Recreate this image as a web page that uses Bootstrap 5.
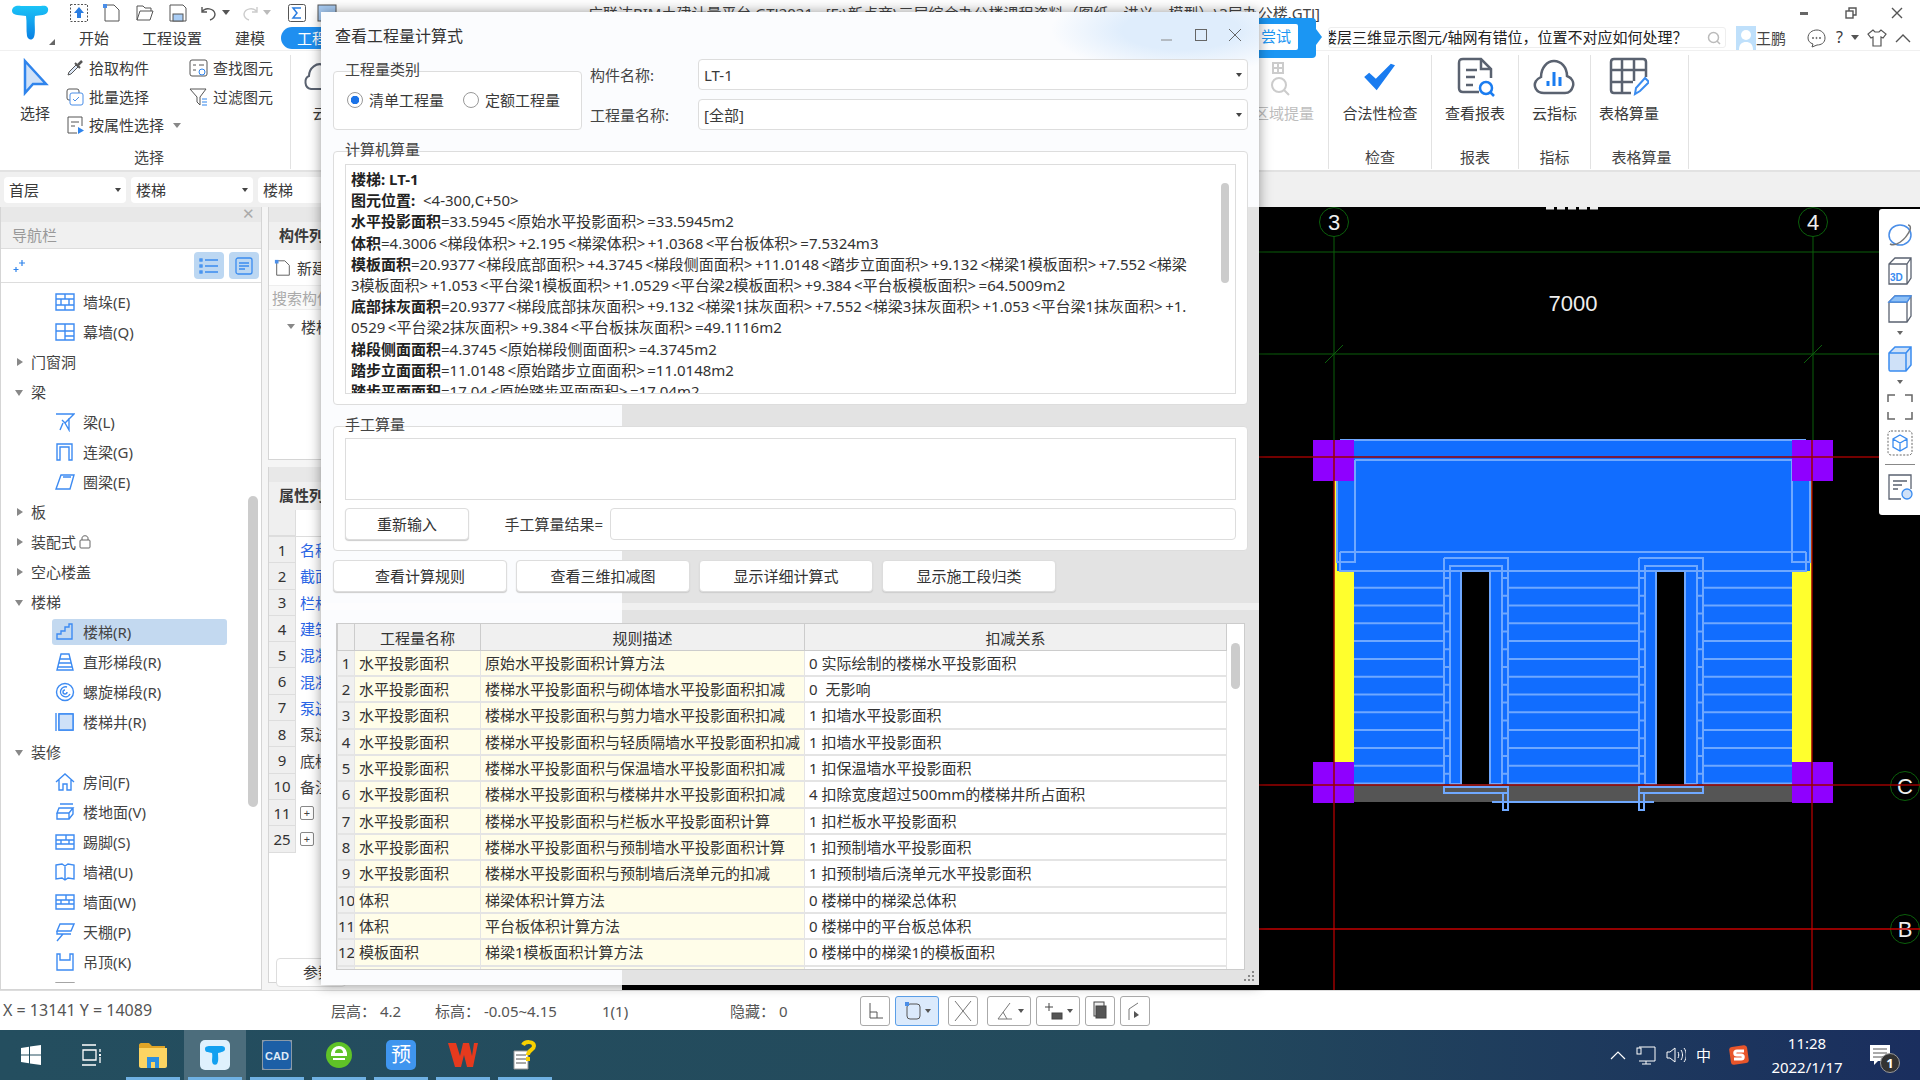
<!DOCTYPE html>
<html lang="zh-CN">
<head>
<meta charset="UTF-8">
<title>查看工程量计算式</title>
<link href="https://cdn.jsdelivr.net/npm/bootstrap@5.3.3/dist/css/bootstrap.min.css" rel="stylesheet">
<style>
html,body{margin:0;width:1920px;height:1080px;overflow:hidden}
body{font:15px/1.2 "Noto Sans","Noto Sans CJK SC",sans-serif;color:#3a3a3a;background:#fff;position:relative}
svg{display:block;flex:none}
/* app header */
.app-head{height:50px;background:#fff}
.logo-col{width:62px;padding:5px 0 0 11px;position:relative}
.logo-corner{position:absolute;left:49px;top:39px;border:3px solid transparent;border-right-color:#666;border-bottom-color:#666}
.qat-row{height:25px}
.qat-btn{width:33px;display:flex;justify-content:center}
.qat-end{width:20px}
.caret-dn{width:0;height:0;border:4px solid transparent;border-top:5px solid #555;border-bottom:0}
.caret-lt{border-top-color:#bbb}
.app-title{position:absolute;left:588px;top:4px;white-space:nowrap;font-size:15px;color:#444}
.win-btns{position:absolute;right:0;top:0;height:25px}
.win-btns span{width:46px;display:flex;justify-content:center;align-items:center}
.tab-row{height:25px;padding-left:17px}
.tab-item{margin-right:33px;white-space:nowrap}
.tab-on{background:#1f8ff0;color:#fff;border-radius:12px;padding:2px 16px;margin-left:-17px;margin-right:0}
.help-box{margin-left:auto;width:398px;height:21px;border:1px solid #eee;border-radius:3px;overflow:hidden;white-space:nowrap;color:#222;font-size:15px;line-height:19px}
.help-text{margin-left:-7px;width:384px;overflow:hidden}
.user-name{margin:0 20px 0 0;color:#444}
.user-face{width:20px;height:24px;margin-left:10px;background:#bfe0fb}
.top-icons{width:106px;gap:8px}
/* ribbon */
.ribbon{height:122px;border-top:1px solid #f0f0f0;border-bottom:2px solid #e2e2e2;padding-top:4px;background:#fff}
.rb-group{height:114px;border-right:1px solid #e2e2e2;position:relative;display:flex;flex-direction:column;flex:none}
.rb-body{flex:1;display:flex}
.rb-foot{height:22px;text-align:center;color:#444;line-height:20px}
.w-sel{width:291px}.w-cloud{width:1038px}.w-chk{width:103px}.w-rep{width:87px}.w-idx{width:72px}.w-tab{width:98px}
.foot-sel{padding-left:8px}
.rb-big{display:flex;flex-direction:column;align-items:center;padding-top:1px;white-space:nowrap}
.rb-big svg{height:42px;margin-bottom:6px}
.rb-big.dim{color:#bdbdbd}
.rb-small{display:flex;align-items:center;height:28.500px;gap:5px;white-space:nowrap}
.sel-col1{width:123px;margin-left:16px;margin-top:-1px}
.sel-col2{width:100px;margin-left:0;margin-top:-1px}
.cloud-l{margin-left:12px}
.cloud-r{margin-left:auto;margin-right:14px}
/* combo strip */
.combo-strip{height:35px;background:#f0f0f0;padding:5px 4px 3px;gap:5px}
.strip-sel{width:122px;height:26px;background:#fff;border-radius:4px;padding:0 5px;display:flex;align-items:center;justify-content:space-between}
.strip-sel .caret-dn{border-width:3px;border-top:4px solid #444}
/* main area */
.work-area{height:783px;background:#f5f5f5}
.side-panel{width:262px;background:#fff;border:1px solid #d5d5d5;border-top:0;overflow:hidden;position:relative;flex:none}
.pane-bar{height:15px;background:#e8e8e8;position:relative}
.pane-x{position:absolute;right:6px;top:-3px;color:#aaa;font-size:15px}
.pane-title{height:27px;background:#f0f0f0;border-bottom:1px solid #ddd;padding:0 11px;line-height:26px;color:#999}
.nav-tools{height:34px;border-bottom:1px solid #ddd;padding:0 2px 0 12px;gap:5px}
.view-btn{width:30px;height:27px;background:#bcd7f2;border-radius:4px;display:flex;align-items:center;justify-content:center}
.nav-tree{height:700px;overflow:hidden;padding-top:4px}
.tree-row{height:30px;display:flex;align-items:center;position:relative;white-space:nowrap;color:#444}
.tree-l1{padding-left:30px}
.tree-l2{padding-left:82px}
.tree-l2 svg{position:absolute;left:54px;top:5px}
.tree-on::before{content:"";position:absolute;left:51px;width:175px;top:2px;bottom:2px;background:#c3d9f0;border-radius:3px}
.tree-on span{position:relative}
.tree-arr{position:absolute;left:14px;top:11px;width:0;height:0;border:4px solid transparent}
.arr-r{border-left:6px solid #888;border-right:0;left:16px}
.arr-d{border-top:6px solid #888;border-bottom:0;top:13px}
.tree-thumb{position:absolute;left:247px;top:289px;width:10px;height:311px;background:#ccc;border-radius:5px}
.lock-ic{margin-left:3px}
.mid-panel{width:354px;margin-left:6px;flex:none;overflow:hidden}
.mid-top{height:253px;background:#fff;border:1px solid #d5d5d5;border-top:0}
.mid-tab{height:28px;background:#f0f0f0;font-weight:700;padding:0 10px;line-height:27px}
.mid-new{height:35px;padding-left:5px;gap:5px}
.mid-search{height:25px;background:#fafafa;padding-left:3px;color:#aaa;line-height:25px;border-top:1px solid #eee;border-bottom:1px solid #eee}
.mid-node{height:33px;padding-left:18px;gap:6px}
.mid-low{margin-top:7px;height:516px;border:1px solid #d5d5d5;border-top:0;background:#fff}
.prop-head{height:27px;border-bottom:1px solid #ddd}
.prop-row{height:26.3px;display:flex;align-items:center;color:#2a66e6}
.prop-num{width:27px;height:100%;background:#efefef;border-right:1px solid #ddd;border-bottom:1px solid #ddd;display:flex;align-items:center;justify-content:center;color:#333;margin-right:4px;flex:none}
.prop-dark{color:#444}
.prop-plus{width:14px;height:14px;border:1px solid #888;border-radius:2px;font-size:11px;line-height:12px;text-align:center;color:#444}
.ref-btn{position:absolute;left:276px;top:958px;width:70px;height:29px;border:1px solid #ddd;border-radius:4px;background:#fff;padding-left:26px;line-height:27px}
.canvas-wrap{position:relative;flex:1;background:#000}
.side-tools{position:absolute;right:0;top:2px;width:41px;height:306px;background:#fff;border-radius:3px 0 0 3px;padding-top:13px;display:flex;flex-direction:column;align-items:center}
.side-tools hr{width:30px;margin:8px 0 9px;border-color:#888;opacity:1}
.cv-mini{border-width:3px;border-top:4px solid #666;margin:7px 0 10px}
.cv-hex{margin-top:10px}
/* status bar and taskbar */
.status-bar{height:40px;background:#fff;border-top:1px solid #ddd;color:#555;white-space:nowrap}
.st-xy{width:331px;padding-left:3px;font-size:16px}.st-a{width:104px}.st-b{width:167px}.st-c{width:128px}.st-d{width:130px}
.tool-btn{height:30px;width:30px;margin-right:5px;border:1px solid #aaa;border-radius:3px;display:flex;align-items:center;justify-content:center;gap:3px;background:#fff}
.tool-wide{width:44px}
.tool-on{background:#dbeafc;border-color:#5b9fe8}
.tool-gap{margin-left:4px}
.tool-btn .caret-dn{border-width:3px;border-top:4px solid #555}
.task-bar{height:50px;background:linear-gradient(90deg,#244e5f,#234a5c 60%,#1a2e5e);color:#fff}
.task-slot{width:62px;height:50px;display:flex;align-items:center;justify-content:center;position:relative;flex:none}
.task-slot.slot-view{width:60px}
.task-open::after{content:"";position:absolute;left:4px;right:4px;bottom:0;height:3px;background:#6fb1e3}
.task-on{background:#4c6d7c}
.task-tray{margin-left:auto;gap:10px;padding-right:30px}
.task-clock{text-align:center;width:90px;margin:0 8px 0 3px;line-height:24px;font-size:15px}
.note-badge{position:absolute;right:-10px;bottom:-8px;width:20px;height:20px;border-radius:50%;background:#333;border:1px solid #999;font-size:13px;font-weight:700;line-height:18px;text-align:center}
/* help bubble under the dialog */
.help-bubble{position:absolute;left:1000px;top:18px;width:316px;height:40px;background:#1b96f3;border-radius:4px}
.help-bubble::after{content:"";position:absolute;right:-6px;top:11px;border:8px solid transparent;border-left:6px solid #1b96f3;border-right:0}
.try-btn{position:absolute;right:18px;top:6px;width:60px;height:26px;background:#fff;color:#1b96f3;border-radius:2px;text-align:right;padding-right:7px;line-height:25px}
/* dialog */
.qty-dialog{position:absolute;left:321px;top:12px;width:938px;height:973px;padding:0 11px 0 12px;box-shadow:0 0 12px rgba(0,0,0,.4);
 background:linear-gradient(#e3e3e3,#e3e3e3) 301px 195px/100% 100% no-repeat,radial-gradient(ellipse 130px 44px at 860px 18px,#dfedfc 45%,rgba(223,237,252,0) 100%),#fbfcfe}
.dlg-head{height:47px;margin-left:2px;font-size:16px;line-height:49px;color:#333;position:relative}
.dlg-ctl{position:absolute;right:0;top:0;height:46px;display:flex;align-items:center;gap:20px;padding-right:6px}
.gbox{border:1px solid #ddd;border-radius:4px;background:#fff;position:relative}
.gbox-cap{position:absolute;left:11px;top:-12px;color:#444;white-space:nowrap}
.top-fields{height:71px}
.gbox-kind{width:249px;height:59px;margin-top:12px;padding-top:19px;padding-left:13px;flex:none;gap:19px}
.form-check-input.radio-gtj{width:16px;height:16px;margin:0 6px 0 0;border:1px solid #999;float:none}
.form-check-input.radio-gtj:checked{background-color:#fff;border-color:#999;background-image:radial-gradient(circle,#1a73e8 0 4px,transparent 4.5px)}
.radio-line{display:flex;align-items:center;white-space:nowrap;height:18px}
.name-fields{flex:1;padding-left:8px}
.name-row{height:31px;margin-bottom:9px}
.name-lbl{width:108px;color:#444}
.name-sel{flex:1;height:31px;border:1px solid #ddd;border-radius:4px;background:#fff;padding:0 5px;display:flex;align-items:center;justify-content:space-between}
.name-sel .caret-dn{border-width:3px;border-top:4px solid #444}
.gbox-calc{height:254px;margin-top:21px;padding:12px 11px}
.calc-text{height:230px;border:1px solid #ddd;padding:4px 5px;overflow:hidden;position:relative}
.calc-line{height:21.2px;line-height:21.2px;white-space:nowrap;font-size:15px;color:#333}
.calc-line b{color:#222}
.calc-thumb{position:absolute;right:6px;top:18px;width:8px;height:100px;background:#ccc;border-radius:4px}
.gbox-hand{height:125px;margin-top:21px;padding:11px 11px 0}
.hand-area{height:62px;border:1px solid #ddd}
.hand-row{margin-top:8px;height:32px}
.dlg-btn{border:1px solid #ddd;border-radius:4px;background:#fff;box-shadow:0 1px 1px #ccc;font-size:15px;color:#333;padding:0;height:32px;line-height:30px}
.btn-reset{width:124px}
.hand-lbl{width:141px;text-align:right;padding-right:7px;white-space:nowrap}
.hand-input{flex:1;height:32px;border:1px solid #ddd;border-radius:4px;background:#fff}
.dlg-btns{margin-top:9px;gap:9px}
.dlg-btns .dlg-btn{width:174px}
.dlg-split{height:7px;margin:11px -11px 13px -12px;background:rgba(255,255,255,.45)}
.qty-wrap{margin-left:3px;width:909px;height:347px;border:1px solid #ccc;background:#fff;overflow:hidden;position:relative}
table.qty-table{table-layout:fixed;width:889px;margin:0;border-collapse:collapse;font-size:15px;color:#333}
.qty-table>thead>tr>th{--bs-table-bg:#f0f0f0;height:26px;padding:0;text-align:center;font-weight:400;border:1px solid #ccc;border-top:0;line-height:24px;color:#333}
.qty-table>tbody>tr>td{height:26px;padding:0 3px 0 4px;border:1px solid #e4e4e4;border-width:0 1px 2px 1px;white-space:nowrap;overflow:hidden;line-height:24px}
.qty-table>tbody>tr:nth-child(3n)>td{height:27px}
.qty-table>tbody>tr>td.row-no{--bs-table-bg:#f0f0f0;padding:0;text-align:center}
.qty-table>tbody>tr>td.row-ylw{--bs-table-bg:#fffde9}
.qty-thumb{position:absolute;left:894px;top:19px;width:9px;height:46px;background:#ccc;border-radius:5px}
.dlg-grip{position:absolute;right:4px;bottom:3px}
</style>
</head>
<body class="d-flex flex-column">

<!-- title row + tabs -->
<div class="app-head d-flex">
  <div class="logo-col">
    <svg width="38" height="36" viewBox="0 0 38 36"><defs><linearGradient id="tg" x1="0" y1="0" x2="0" y2="1"><stop offset="0" stop-color="#1bc4f7"/><stop offset="1" stop-color="#0a80e4"/></linearGradient></defs><path fill="url(#tg)" d="M1 6C1 1 6 0 10 1H30C35 0 38 2 37 6C36 11 28 10 24 11C23 18 25 27 23 32C21 36 17 35 16 31C15 25 16 17 15 11C10 10 1 11 1 6z"/></svg>
    <i class="logo-corner"></i>
  </div>
  <div class="flex-grow-1">
    <div class="qat-row d-flex align-items-center">
      <span class="qat-btn"><svg width="20" height="20" viewBox="0 0 20 20" fill="none" stroke="#555"><rect x="1.5" y="1.5" width="17" height="17" stroke-dasharray="2 1.5"/><path fill="#2a7de1" stroke="none" d="M10 4l5 6h-3v5H8v-5H5z"/></svg></span>
      <span class="qat-btn"><svg width="20" height="20" viewBox="0 0 20 20" fill="none" stroke="#555"><path d="M3 2h9l5 5v11H3z"/><rect x="1" y="1" width="4" height="4" fill="#4a8ee8" stroke="none"/></svg></span>
      <span class="qat-btn"><svg width="20" height="18" viewBox="0 0 20 18" fill="none" stroke="#555"><path d="M2 16V2h6l2 2h6v3M2 16l3-9h13l-3 9z"/></svg></span>
      <span class="qat-btn"><svg width="20" height="18" viewBox="0 0 20 18" fill="none" stroke="#555"><path d="M2 1h13l3 3v13H2z"/><rect x="5" y="10" width="10" height="7" fill="#a9cdf5"/></svg></span>
      <span class="qat-btn ms-1"><svg width="18" height="16" viewBox="0 0 18 16" fill="none" stroke="#555" stroke-width="1.4"><path d="M2 2v5h5M2 7c3-5 12-4 13 2 0 3-2 5-5 6"/></svg><i class="caret-dn align-self-center ms-1"></i></span>
      <span class="qat-btn ms-2"><svg width="18" height="16" viewBox="0 0 18 16" fill="none" stroke="#ccc" stroke-width="1.4"><path d="M16 2v5h-5M16 7c-3-5-12-4-13 2 0 3 2 5 5 6"/></svg><i class="caret-dn caret-lt align-self-center ms-1"></i></span>
      <span class="qat-btn ms-2"><svg width="20" height="20" viewBox="0 0 20 20" fill="none" stroke="#555"><rect x="1.5" y="1.5" width="17" height="17" rx="2"/><path stroke="#2a7de1" stroke-width="1.5" d="M14 5H6l4 5-4 5h8"/></svg></span>
      <span class="qat-btn qat-end ms-1"><svg width="20" height="18" viewBox="0 0 20 18" fill="#a9cdf5" stroke="#555"><rect x="1" y="1" width="18" height="16"/></svg></span>
    </div>
    <div class="tab-row d-flex align-items-center">
      <span class="tab-item">开始</span><span class="tab-item">工程设置</span><span class="tab-item">建模</span><span class="tab-item tab-on">工程量</span>
      <div class="help-box d-flex align-items-center">
        <div class="help-text">楼层三维显示图元/轴网有错位，位置不对应如何处理？</div>
        <svg class="ms-auto me-1" width="14" height="14" viewBox="0 0 14 14" fill="none" stroke="#bbb" stroke-width="1.5"><circle cx="6.5" cy="6.5" r="5"/><path d="M10 10l3 3"/></svg>
      </div>
      <span class="user-face d-flex justify-content-center align-items-end"><svg width="14" height="22" viewBox="0 0 14 22" fill="#fff"><circle cx="7" cy="7" r="5"/><path d="M0 22c0-6 3-8 7-8s7 2 7 8z"/></svg></span>
      <span class="user-name">王鹏</span>
      <div class="top-icons d-flex align-items-center me-2">
        <svg width="22" height="20" viewBox="0 0 22 20" fill="none" stroke="#555"><path d="M2 10c0-5 4-8 9-8 4 0 8 3 8 8s-4 7-8 7l-5 2 1-3c-3-1-5-3-5-6z"/><circle cx="7" cy="10" r=".6"/><circle cx="10.500" cy="10" r=".6"/><circle cx="14" cy="10" r=".6"/></svg>
        <span class="fs-6">?</span><i class="caret-dn"></i>
        <svg width="20" height="20" viewBox="0 0 20 20" fill="none" stroke="#555" stroke-width="1.2"><path d="M6 2L1 6l3 4 2-1v9h8V9l2 1 3-4-5-4-2 2h-4z"/></svg>
        <svg width="16" height="10" viewBox="0 0 16 10" fill="none" stroke="#555" stroke-width="1.4"><path d="M1 9l7-7 7 7"/></svg>
      </div>
    </div>
  </div>
  <div class="app-title">广联达BIM土建计量平台 GTJ2021 - [F:\新点商\三层综合办公楼课程资料（图纸、讲义、模型）\3层办公楼.GTJ]</div>
  <div class="win-btns d-flex align-items-center">
    <span><svg width="10" height="4" viewBox="0 0 10 4"><rect y="1" width="8" height="3" fill="#666"/></svg></span>
    <span><svg width="12" height="12" viewBox="0 0 12 12" fill="none" stroke="#555" stroke-width="1.4"><rect x="1" y="4" width="7" height="7"/><path d="M4 4V1h7v7H8"/></svg></span>
    <span><svg width="12" height="12" viewBox="0 0 12 12" stroke="#555" stroke-width="1.4"><path d="M1 1l10 10M11 1L1 11"/></svg></span>
  </div>
</div>

<div class="help-bubble"><span class="try-btn">尝试</span></div>

<!-- ribbon -->
<div class="ribbon d-flex">
  <div class="rb-group w-sel">
    <div class="rb-body">
      <div class="rb-big ms-3 ps-1">
        <svg width="28" height="36" viewBox="0 0 28 36" fill="#cfe1f8" stroke="#2f84ec" stroke-width="2.500"><path d="M4 2l21 23H12l-8 9z"/></svg>
        <span>选择</span>
      </div>
      <div class="sel-col1">
        <div class="rb-small"><svg width="18" height="18" viewBox="0 0 18 18" fill="none" stroke="#555"><path d="M2 16l1-3 7-7 2 2-7 7z" fill="#dce8f8"/><path d="M9 4l5 5" stroke-width="2"/><path d="M12 6l4-4" stroke-width="2.500"/></svg>拾取构件</div>
        <div class="rb-small"><svg width="18" height="18" viewBox="0 0 18 18" fill="none" stroke="#555"><rect x="1" y="1" width="12" height="11" rx="2"/><rect x="4" y="5" width="13" height="12" rx="2" fill="#fff" stroke="#4a8ee8"/><path stroke="#4a8ee8" d="M7 11l2 2 4-4"/></svg>批量选择</div>
        <div class="rb-small"><svg width="18" height="18" viewBox="0 0 18 18" fill="none" stroke="#555"><path d="M2 1h14v9M2 1v16h9M5 6h8M5 10h4"/><path fill="#2f84ec" stroke="none" d="M12 11l6 3.500-6 3.500z"/></svg>按属性选择<i class="caret-dn ms-1" style="border-top-color:#888"></i></div>
      </div>
      <div class="sel-col2">
        <div class="rb-small"><svg width="19" height="19" viewBox="0 0 19 19" fill="none" stroke="#555"><rect x="1" y="1" width="17" height="16" rx="2"/><path d="M4 6h3M10 6h5M4 11h3"/><circle cx="13" cy="13" r="3" stroke="#2f84ec"/></svg>查找图元</div>
        <div class="rb-small"><svg width="19" height="19" viewBox="0 0 19 19" fill="none" stroke="#555"><path d="M1 2h16l-6 8v8l-3-3v-5z"/><path stroke="#2f84ec" d="M13 12h5M13 15h5M13 18h5"/></svg>过滤图元</div>
      </div>
    </div>
    <div class="rb-foot foot-sel">选择</div>
  </div>
  <div class="rb-group w-cloud">
    <div class="rb-body">
      <div class="rb-big cloud-l"><svg width="34" height="36" viewBox="0 0 34 36" fill="none" stroke="#5a6270" stroke-width="2"><path d="M8 30C1 29 1 19 6 17 6 9 14 3 20 6c6 2 8 8 7 11 5 3 5 12-2 13z"/></svg><span>云</span></div>
      <div class="rb-big cloud-r dim"><svg width="34" height="36" viewBox="0 0 34 36" fill="none" stroke="#ccc" stroke-width="2"><circle cx="12" cy="26" r="7"/><path d="M17 31l5 5M6 4h10v10H6zM11 4v10M6 9h10"/></svg><span>区域提量</span></div>
    </div>
    <div class="rb-foot"></div>
  </div>
  <div class="rb-group w-chk">
    <div class="rb-body justify-content-center">
      <div class="rb-big"><svg width="40" height="36" viewBox="-4 -7 48 50"><path fill="#1a7cf0" d="M1 18l6-5 8 7L33 2l5 2-22 30z"/></svg><span>合法性检查</span></div>
    </div>
    <div class="rb-foot">检查</div>
  </div>
  <div class="rb-group w-rep">
    <div class="rb-body justify-content-center">
      <div class="rb-big"><svg width="40" height="40" viewBox="0 0 40 40" fill="none" stroke="#5a6270" stroke-width="2.500"><path d="M24 35H8c-3 0-4-2-4-4V6c0-3 1-4 4-4h18l10 10v9"/><path d="M26 2v10h10M11 13h11M11 20h9M11 28h7"/><circle cx="31" cy="31" r="6" stroke="#1a7cf0"/><path stroke="#1a7cf0" d="M35 35l4 4"/></svg><span>查看报表</span></div>
    </div>
    <div class="rb-foot">报表</div>
  </div>
  <div class="rb-group w-idx">
    <div class="rb-body justify-content-center">
      <div class="rb-big"><svg width="42" height="38" viewBox="0 0 42 38" fill="none" stroke="#5a6270" stroke-width="2.500"><path d="M11 35C3 35 0 28 3 23c1-2 3-3 5-4C8 10 14 3 21 3s13 6 13 15c5 2 7 6 6 10-1 4-4 7-8 7z"/><path stroke="#1a7cf0" stroke-width="3" d="M15 28v-5M21 28V14M27 28v-9"/></svg><span>云指标</span></div>
    </div>
    <div class="rb-foot">指标</div>
  </div>
  <div class="rb-group w-tab">
    <div class="rb-body ps-2">
      <div class="rb-big"><svg width="40" height="40" viewBox="0 0 40 40" fill="none" stroke="#5a6270" stroke-width="2.500"><path d="M22 36H5c-2 0-3-1-3-3V5c0-2 1-3 3-3h29c2 0 3 1 3 3v15M2 13h35M2 25h22M13 2v34M25 2v22"/><path stroke="#3a8cf0" stroke-width="2" d="M26 37l1-6 9-10 4 4-9 9z"/></svg><span>表格算量</span></div>
    </div>
    <div class="rb-foot ps-1">表格算量</div>
  </div>
</div>

<div class="combo-strip d-flex">
  <div class="strip-sel">首层<i class="caret-dn"></i></div>
  <div class="strip-sel">楼梯<i class="caret-dn"></i></div>
  <div class="strip-sel">楼梯<i class="caret-dn"></i></div>
</div>

<!-- work area: navigator, component panes, drawing -->
<div class="work-area d-flex">
  <div class="side-panel">
    <div class="pane-bar"><span class="pane-x">✕</span></div>
    <div class="pane-title">导航栏</div>
    <div class="nav-tools d-flex align-items-center">
      <svg class="me-auto" width="14" height="14" viewBox="0 0 14 14" stroke="#2f84ec" stroke-width="1.200"><path d="M9 1v6M6 4h6M3 8v5M.5 10.500h5"/></svg>
      <span class="view-btn"><svg width="20" height="16" viewBox="0 0 20 16" fill="none" stroke="#3a8cf0" stroke-width="1.300"><path d="M6 2h13M6 8h13M6 14h13"/><rect x="1" y="1" width="2" height="2"/><rect x="1" y="7" width="2" height="2"/><rect x="1" y="13" width="2" height="2"/></svg></span>
      <span class="view-btn"><svg width="18" height="18" viewBox="0 0 18 18" fill="none" stroke="#3a8cf0" stroke-width="1.300"><rect x="1" y="1" width="16" height="16" rx="2"/><path d="M4 6h10M4 9h10M4 12h6"/></svg></span>
    </div>
    <div class="nav-tree" id="navTree"></div>
    <div class="tree-thumb"></div>
  </div>

  <div class="mid-panel">
    <div class="mid-top">
      <div class="pane-bar"></div>
      <div class="mid-tab">构件列表</div>
      <div class="mid-new d-flex align-items-center"><svg width="18" height="18" viewBox="0 0 20 20" fill="none" stroke="#555"><path d="M3 2h9l5 5v11H3z"/><rect x="1" y="1" width="4" height="4" fill="#4a8ee8" stroke="none"/></svg>新建</div>
      <div class="mid-search">搜索构件...</div>
      <div class="mid-node d-flex align-items-center"><i class="caret-dn" style="border-top-color:#888"></i>楼梯</div>
    </div>
    <div class="mid-low">
      <div class="pane-bar"></div>
      <div class="mid-tab">属性列表</div>
      <div class="prop-head d-flex"><span class="prop-num"></span></div>
      <div id="propRows"></div>
    </div>
  </div>
  <div class="ref-btn">参数</div>

  <div class="canvas-wrap">
    <svg id="drawSvg" width="1298" height="783" viewBox="622 207 1298 783">
      <path d="M1546 208H1600" stroke="#eee" stroke-width="3" stroke-dasharray="8 3"/>
      <g stroke="#0b5f0b" stroke-width="1" fill="none">
        <path d="M622 252H1879M622 354H1879M1334 236V440M1813 236V440"/>
        <path d="M1325 363l18-18M1804 363l18-18"/>
        <circle cx="1334" cy="222" r="14.500"/><circle cx="1813" cy="222" r="14.500"/>
        <circle cx="1905" cy="786" r="14.500"/><circle cx="1905" cy="929" r="14.500"/>
      </g>
      <g fill="#eee" font-family="Liberation Sans, sans-serif" font-size="22" text-anchor="middle">
        <text x="1334" y="230">3</text><text x="1813" y="230">4</text>
        <text x="1905" y="794">C</text><text x="1905" y="937">B</text>
        <text x="1573" y="311">7000</text>
      </g>
      <g fill="#ffff2d"><rect x="1334" y="481" width="20" height="281"/><rect x="1792" y="481" width="20" height="281"/></g>
      <rect x="1354" y="784" width="438" height="18" fill="#555"/>
      <g fill="#116dff"><rect x="1337" y="440" width="473" height="131"/><rect x="1354" y="571" width="438" height="213"/></g>
      <g fill="#000"><rect x="1461" y="571" width="29" height="213"/><rect x="1656" y="571" width="29" height="213"/></g>
      <g fill="none" stroke="#6fa8ff" stroke-width="2" id="stairLines">
        <path d="M1340 440H1806M1355 460H1792M1337 450V562H1355V460M1810 450V562H1792V460M1340 552H1806M1340 552V571H1461M1490 571H1656M1685 571H1806V552"/>
      </g>
      <g fill="#8f00ff"><rect x="1313" y="440" width="41" height="41"/><rect x="1792" y="440" width="41" height="41"/><rect x="1313" y="762" width="41" height="41"/><rect x="1792" y="762" width="41" height="41"/></g>
      <g fill="none">
        <path stroke="#9a0000" stroke-width="1.500" d="M622 457H1879M622 785H1920M1334 440V990M1812 440V990"/>
        <path stroke="#c40000" stroke-width="1.500" d="M622 929H1920"/>
      </g>
    </svg>
    <div class="side-tools">
      <svg width="26" height="26" viewBox="0 0 26 26" fill="none" stroke="#4a8ee8" stroke-width="1.500"><ellipse cx="13" cy="13" rx="11" ry="10"/><path stroke="#777" d="M3 22c5 3 15-3 20-14 1-3 0-5-2-5"/></svg>
      <svg class="mt-2" width="26" height="30" viewBox="0 0 26 30" fill="none" stroke="#5a6270" stroke-width="1.300"><path d="M2 8l6-6h16v20l-4 6H2zM2 8h18v20M20 8l4-6"/><text x="3" y="25" fill="#3a8cf0" stroke="none" font-size="10" font-weight="700" font-family="Liberation Sans,sans-serif">3D</text></svg>
      <svg class="mt-2" width="26" height="30" viewBox="0 0 26 30" fill="none" stroke="#5a6270" stroke-width="1.300"><path d="M2 8l6-6h16v20l-4 6H2zM2 8h18v20M20 8l4-6"/><path fill="#8ec0f5" stroke="#4a8ee8" d="M2 8l6-6h16l-4 6z"/></svg>
      <i class="caret-dn cv-mini"></i>
      <svg width="26" height="28" viewBox="0 0 26 28" fill="#cfe1f8" stroke="#3a8cf0" stroke-width="1.500"><path d="M2 8l6-6h16v18l-5 6H3c-1 0-1-1-1-2zM2 8h17v18M19 8l5-6"/></svg>
      <i class="caret-dn cv-mini"></i>
      <svg width="26" height="26" viewBox="0 0 26 26" fill="none" stroke="#666" stroke-width="1.500"><path d="M1 8V1h7M18 1h7v7M25 18v7h-7M8 25H1v-7"/></svg>
      <svg class="cv-hex" width="26" height="26" viewBox="0 0 26 26" fill="none" stroke="#666"><rect x="1" y="1" width="24" height="24" rx="3" stroke-dasharray="2 1.500"/><path stroke="#3a8cf0" stroke-width="1.300" d="M13 5l7 4v8l-7 4-7-4V9zM6 9l7 4 7-4M13 13v8"/></svg>
      <hr>
      <svg width="26" height="26" viewBox="0 0 26 26" fill="none" stroke="#5a6270" stroke-width="1.300"><path d="M14 25H2V1h22v14M6 7h14M6 11h9M6 15h5"/><circle cx="20" cy="20" r="5" fill="#cfe1f8" stroke="#3a8cf0"/></svg>
    </div>
  </div>
</div>

<!-- status bar -->
<div class="status-bar d-flex align-items-center">
  <span class="st-xy">X = 13141 Y = 14089</span>
  <span class="st-a">层高：&nbsp;4.2</span>
  <span class="st-b">标高：&nbsp;-0.05~4.15</span>
  <span class="st-c">1(1)</span>
  <span class="st-d">隐藏：&nbsp;0</span>
  <span class="tool-btn"><svg width="18" height="18" viewBox="0 0 18 18" fill="none" stroke="#555"><path d="M4 1v15h13M4 10h7v6"/></svg></span>
  <span class="tool-btn tool-wide tool-on"><svg width="18" height="20" viewBox="0 0 18 20" fill="none" stroke="#555"><rect x="3" y="3" width="13" height="15" rx="3"/><rect x="1" y="1" width="4" height="4" fill="#4a8ee8" stroke="none"/></svg><i class="caret-dn"></i></span>
  <span class="tool-btn tool-gap"><svg width="20" height="22" viewBox="0 0 20 22" stroke="#777"><path d="M2 1l16 20M18 1L2 21"/></svg></span>
  <span class="tool-btn tool-wide tool-gap"><svg width="20" height="20" viewBox="0 0 20 20" fill="none" stroke="#777"><path d="M15 2L3 18h14M8 11l4 7"/></svg><i class="caret-dn"></i></span>
  <span class="tool-btn tool-wide"><svg width="20" height="18" viewBox="0 0 20 18" stroke="#444"><path d="M5 1v8M1 5h8"/><rect x="8" y="11" width="10" height="6" fill="#555"/></svg><i class="caret-dn"></i></span>
  <span class="tool-btn"><svg width="18" height="20" viewBox="0 0 18 20" fill="#555" stroke="#444"><rect x="3" y="1" width="10" height="14" fill="#eee"/><rect x="5" y="5" width="10" height="12"/></svg></span>
  <span class="tool-btn"><svg width="18" height="20" viewBox="0 0 18 20" fill="none" stroke="#777"><path d="M3 19V8l9-6"/><path fill="#555" stroke="none" d="M8 10l5 4-5 3z"/></svg></span>
</div>

<!-- taskbar -->
<div class="task-bar d-flex">
  <span class="task-slot"><svg width="20" height="20" viewBox="0 0 20 20" fill="#fff"><path d="M0 3l8-1.200v7.700H0zM9 1.600L20 0v9.500H9zM0 10.500h8v7.700L0 17zM9 10.500h11V20L9 18.400z"/></svg></span>
  <span class="task-slot slot-view"><svg width="22" height="22" viewBox="0 0 22 22" fill="none" stroke="#fff" stroke-width="1.300"><path d="M1 1h14M1 21h14M2 6h13v10H2zM19 5v3M19 13v6"/><rect x="18" y="10" width="2" height="2" fill="#fff" stroke="none"/></svg></span>
  <span class="task-slot task-open"><svg width="28" height="26" viewBox="0 0 28 26"><path fill="#e0a526" d="M0 3c0-1 1-2 2-2h8l3 3h13v3H0z"/><path fill="#fcd462" d="M0 6h28v18c0 1-1 2-2 2H2c-1 0-2-1-2-2z"/><path fill="#2c8fe0" d="M8 15h12v11h-4v-6h-4v6H8z"/></svg></span>
  <span class="task-slot task-open task-on"><svg width="30" height="30" viewBox="0 0 30 30"><rect width="30" height="30" rx="5" fill="#dff1fd"/><path fill="#12a0f0" d="M5 9c0-3 3-3 6-3h9c3 0 5 0 5 3s-4 3-7 4c0 4 1 8-1 11-1 1-3 1-4 0-2-3 0-7-1-11-3-1-7 0-7-4z"/></svg></span>
  <span class="task-slot task-open"><svg width="30" height="30" viewBox="0 0 30 30"><rect width="30" height="30" rx="3" fill="#1c5fa6" stroke="#8a9aa8" stroke-width="2"/><text x="15" y="20" fill="#dfeaf6" font-size="11" font-weight="700" text-anchor="middle" font-family="Liberation Sans,sans-serif">CAD</text></svg></span>
  <span class="task-slot task-open"><svg width="30" height="30" viewBox="0 0 30 30"><circle cx="15" cy="15" r="13" fill="#5fc327"/><path fill="#fff" d="M7 13h16v3H7zM9 18h12v2H9zM15 6a8 8 0 0 1 8 7h-4a4 4 0 0 0-8 0H7a8 8 0 0 1 8-7z"/></svg></span>
  <span class="task-slot task-open"><svg width="30" height="30" viewBox="0 0 30 30"><rect width="30" height="30" rx="5" fill="#3f95ef"/><text x="15" y="22" fill="#fff" font-size="20" text-anchor="middle">预</text></svg></span>
  <span class="task-slot task-open"><svg width="30" height="26" viewBox="0 0 30 26"><path fill="#e63a1e" d="M0 1h8l4 13 3-13h6l3 13 2-13h4l-5 24h-6l-3-12-3 12h-6z"/></svg></span>
  <span class="task-slot task-open"><svg width="24" height="32" viewBox="0 0 24 32"><path fill="#fff" stroke="#999" d="M1 12h14v18H1z"/><path stroke="#555" d="M3 16h10M3 20h10M3 24h10"/><path fill="none" stroke="#f8d000" stroke-width="4" d="M10 6c2-4 11-4 11 1 0 4-6 4-6 9"/><rect x="13" y="18" width="4" height="4" fill="#f8d000"/></svg></span>
  <div class="task-tray d-flex align-items-center">
    <svg width="16" height="9" viewBox="0 0 16 9" fill="none" stroke="#fff" stroke-width="1.200"><path d="M1 8l7-7 7 7"/></svg>
    <svg width="20" height="20" viewBox="0 0 20 20" fill="none" stroke="#fff"><path d="M3 2h16v14H3M10 16v3M6 19h9"/><rect x="1" y="3" width="4" height="6"/></svg>
    <svg width="20" height="18" viewBox="0 0 20 18" fill="none" stroke="#fff"><path d="M1 6h3l5-4v14l-5-4H1zM12 6c1 2 1 4 0 6M15 4c2 3 2 7 0 10M18 2c3 4 3 10 0 14"/></svg>
    <span>中</span>
    <svg class="ms-2" width="20" height="20" viewBox="0 0 20 20"><rect x="1" y="1" width="18" height="18" rx="3" fill="#e8552a" transform="rotate(-8 10 10)"/><path fill="none" stroke="#fff" stroke-width="3" d="M15 6H8c-3 0-3 4 0 4h4c3 0 3 4 0 4H5"/></svg>
    <div class="task-clock">11:28<br>2022/1/17</div>
    <span class="position-relative"><svg width="20" height="20" viewBox="0 0 20 20"><path fill="#fff" d="M0 0h20v16H8l-4 4v-4H0z"/><path stroke="#555" d="M3 4h14M3 8h14M3 12h10"/></svg><span class="note-badge">1</span></span>
  </div>
</div>

<!-- 查看工程量计算式 dialog -->
<div class="qty-dialog">
  <div class="dlg-head">查看工程量计算式
    <div class="dlg-ctl">
      <svg width="14" height="14" viewBox="0 0 14 14" stroke="#888"><path d="M1 12h11"/></svg>
      <svg width="14" height="14" viewBox="0 0 14 14" fill="none" stroke="#666"><rect x="1.500" y="1.500" width="11" height="11"/></svg>
      <svg width="14" height="14" viewBox="0 0 14 14" stroke="#666"><path d="M1 1l12 12M13 1L1 13"/></svg>
    </div>
  </div>
  <div class="top-fields d-flex">
    <div class="gbox gbox-kind d-flex align-items-start">
      <span class="gbox-cap">工程量类别</span>
      <label class="radio-line"><input class="form-check-input radio-gtj" type="radio" name="qtype" checked>清单工程量</label>
      <label class="radio-line"><input class="form-check-input radio-gtj" type="radio" name="qtype">定额工程量</label>
    </div>
    <div class="name-fields">
      <div class="name-row d-flex align-items-center"><span class="name-lbl">构件名称:</span><div class="name-sel">LT-1<i class="caret-dn"></i></div></div>
      <div class="name-row d-flex align-items-center"><span class="name-lbl">工程量名称:</span><div class="name-sel">[全部]<i class="caret-dn"></i></div></div>
    </div>
  </div>
  <div class="gbox gbox-calc">
    <span class="gbox-cap">计算机算量</span>
    <div class="calc-text" id="calcText">
      <div class="calc-line"><b>楼梯: LT-1</b></div>
      <div class="calc-line"><b>图元位置:</b>&nbsp; &lt;4-300,C+50&gt;</div>
      <div class="calc-line"><b>水平投影面积</b>=33.5945&lt;原始水平投影面积&gt;=33.5945m2</div>
      <div class="calc-line"><b>体积</b>=4.3006&lt;梯段体积&gt;+2.195&lt;梯梁体积&gt;+1.0368&lt;平台板体积&gt;=7.5324m3</div>
      <div class="calc-line"><b>模板面积</b>=20.9377&lt;梯段底部面积&gt;+4.3745&lt;梯段侧面面积&gt;+11.0148&lt;踏步立面面积&gt;+9.132&lt;梯梁1模板面积&gt;+7.552&lt;梯梁</div>
      <div class="calc-line">3模板面积&gt;+1.053&lt;平台梁1模板面积&gt;+1.0529&lt;平台梁2模板面积&gt;+9.384&lt;平台板模板面积&gt;=64.5009m2</div>
      <div class="calc-line"><b>底部抹灰面积</b>=20.9377&lt;梯段底部抹灰面积&gt;+9.132&lt;梯梁1抹灰面积&gt;+7.552&lt;梯梁3抹灰面积&gt;+1.053&lt;平台梁1抹灰面积&gt;+1.</div>
      <div class="calc-line">0529&lt;平台梁2抹灰面积&gt;+9.384&lt;平台板抹灰面积&gt;=49.1116m2</div>
      <div class="calc-line"><b>梯段侧面面积</b>=4.3745&lt;原始梯段侧面面积&gt;=4.3745m2</div>
      <div class="calc-line"><b>踏步立面面积</b>=11.0148&lt;原始踏步立面面积&gt;=11.0148m2</div>
      <div class="calc-line"><b>踏步平面面积</b>=17.04&lt;原始踏步平面面积&gt;=17.04m2</div>
      <div class="calc-thumb"></div>
    </div>
  </div>
  <div class="gbox gbox-hand">
    <span class="gbox-cap">手工算量</span>
    <div class="hand-area"></div>
    <div class="hand-row d-flex align-items-center">
      <button class="btn dlg-btn btn-reset">重新输入</button>
      <span class="hand-lbl">手工算量结果=</span>
      <div class="hand-input"></div>
    </div>
  </div>
  <div class="dlg-btns d-flex">
    <button class="btn dlg-btn">查看计算规则</button>
    <button class="btn dlg-btn">查看三维扣减图</button>
    <button class="btn dlg-btn">显示详细计算式</button>
    <button class="btn dlg-btn">显示施工段归类</button>
  </div>
  <div class="dlg-split"></div>
  <div class="qty-wrap">
    <table class="table qty-table">
      <colgroup><col style="width:17px"><col style="width:126px"><col style="width:324px"><col style="width:422px"></colgroup>
      <thead><tr><th></th><th>工程量名称</th><th>规则描述</th><th>扣减关系</th></tr></thead>
      <tbody id="qtyBody"></tbody>
    </table>
    <div class="qty-thumb"></div>
  </div>
  <svg class="dlg-grip" width="11" height="11" viewBox="0 0 11 11" fill="#888"><rect x="8" y="0" width="2" height="2"/><rect x="4" y="4" width="2" height="2"/><rect x="8" y="4" width="2" height="2"/><rect x="0" y="8" width="2" height="2"/><rect x="4" y="8" width="2" height="2"/><rect x="8" y="8" width="2" height="2"/></svg>
</div>

<script>
// navigator icons, 20x20 boxes, all blue outline
const icons={
 brick:'<path d="M1 2h18v16H1zM1 7h18M1 13h18M10 2v5M6 7v6M14 7v6M10 13v5"/>',
 wall:'<path d="M1 2h18v16H1zM1 9h18M10 2v16M10 14h9"/>',
 beam:'<path d="M1 2h18l-9 9-3-3M14 6v12l-4-7M5 18l3-7"/>',
 lian:'<path d="M2 18V2h15v16h-3V5H5v13z"/>',
 ring:'<path d="M6 3h13l-4 14H1zM8 5h8"/>',
 stair:'<path d="M2 17v-5h4V9h4V5h4V2h3v15z"/>',
 run:'<path d="M6 2h8l4 16H2zM5 7h10M4 11h12M3 15h14"/>',
 spiral:'<circle cx="10" cy="10" r="8.500"/><path d="M15 12a5 5 0 1 1-3-7M12 10a2 2 0 1 1-2-2"/>',
 well:'<path d="M1 1v18M4 2h14v16H4z"/><path fill="#cfe1f8" d="M4 2h14v16H4z"/>',
 room:'<path d="M1 10l9-8 9 8M4 8v10h4v-6h4v6h4V8"/>',
 floor:'<path d="M5 2h13M4 6h14l-4 5H2l2-5zM2 11v6h12v-6M14 17l4-5V6"/>',
 skirt:'<path d="M1 3h18v14H1zM1 8h18M1 12h18M11 3v5M6 8v4M14 8v4"/>',
 dado:'<path d="M1 3l6-1 3 2 3-2 6 1v14l-6-1-3 2-3-2-6 1zM10 4v14"/>',
 ceil:'<path d="M5 2h14l-3 7H2zM2 9v3h14M8 12l-6 7"/>',
 hang:'<path d="M2 2h3v6h10V2h3v16H2z"/>',
 col:'<path stroke="#888" d="M1 1h18v5H1zM6 6v14M14 6v14"/>'
};
const navRows=[
 [2,'墙垛(E)','brick'],[2,'幕墙(Q)','wall'],[1,'门窗洞','r'],[1,'梁','d'],[2,'梁(L)','beam'],[2,'连梁(G)','lian'],[2,'圈梁(E)','ring'],
 [1,'板','r'],[1,'装配式','r',1],[1,'空心楼盖','r'],[1,'楼梯','d'],[2,'楼梯(R)','stair',0,1],[2,'直形梯段(R)','run'],[2,'螺旋梯段(R)','spiral'],[2,'楼梯井(R)','well'],
 [1,'装修','d'],[2,'房间(F)','room'],[2,'楼地面(V)','floor'],[2,'踢脚(S)','skirt'],[2,'墙裙(U)','dado'],[2,'墙面(W)','skirt'],[2,'天棚(P)','ceil'],[2,'吊顶(K)','hang'],[2,'独立柱装修','col']
];
document.getElementById('navTree').innerHTML=navRows.map(([lv,txt,ic,lock,on])=>{
  if(lv===1){
    const lk=lock?'<svg class="lock-ic" width="12" height="14" viewBox="0 0 12 14" fill="none" stroke="#666"><rect x="1" y="5" width="10" height="8" rx="1"/><path d="M3 5V3c0-3 6-3 6 0v2"/></svg>':'';
    return `<div class="tree-row tree-l1"><i class="tree-arr arr-${ic}"></i><span>${txt}</span>${lk}</div>`;
  }
  return `<div class="tree-row tree-l2${on?' tree-on':''}"><svg width="20" height="20" viewBox="0 0 20 20" fill="none" stroke="#3d8bf2" stroke-width="1.400">${icons[ic]}</svg><span>${txt}</span></div>`;
}).join('');

// property list that shows left of the dialog
const props=['名称','截面','栏杆','建筑','混凝','混凝','泵送','泵送','底标','备注'];
let propHtml=props.map((p,i)=>`<div class="prop-row${i>6?' prop-dark':''}"><span class="prop-num">${i+1}</span>${p}</div>`).join('');
[11,25].forEach(n=>{propHtml+=`<div class="prop-row"><span class="prop-num">${n}</span><span class="prop-plus">+</span></div>`});
document.getElementById('propRows').innerHTML=propHtml;

// thin gaps around the angle brackets in the formula lines
document.querySelectorAll('#calcText .calc-line').forEach((el,i)=>{
  if(i<2) return;
  el.innerHTML=el.innerHTML.replace(/&lt;/g,'\u2009&lt;').replace(/&gt;/g,'&gt;\u2009');
});

// quantity rule table
const rules=[
 ['水平投影面积','原始水平投影面积计算方法','0 实际绘制的楼梯水平投影面积'],
 ['水平投影面积','楼梯水平投影面积与砌体墙水平投影面积扣减','0&nbsp; 无影响'],
 ['水平投影面积','楼梯水平投影面积与剪力墙水平投影面积扣减','1 扣墙水平投影面积'],
 ['水平投影面积','楼梯水平投影面积与轻质隔墙水平投影面积扣减','1 扣墙水平投影面积'],
 ['水平投影面积','楼梯水平投影面积与保温墙水平投影面积扣减','1 扣保温墙水平投影面积'],
 ['水平投影面积','楼梯水平投影面积与楼梯井水平投影面积扣减','4 扣除宽度超过500mm的楼梯井所占面积'],
 ['水平投影面积','楼梯水平投影面积与栏板水平投影面积计算','1 扣栏板水平投影面积'],
 ['水平投影面积','楼梯水平投影面积与预制墙水平投影面积计算','1 扣预制墙水平投影面积'],
 ['水平投影面积','楼梯水平投影面积与预制墙后浇单元的扣减','1 扣预制墙后浇单元水平投影面积'],
 ['体积','梯梁体积计算方法','0 楼梯中的梯梁总体积'],
 ['体积','平台板体积计算方法','0 楼梯中的平台板总体积'],
 ['模板面积','梯梁1模板面积计算方法','0 楼梯中的梯梁1的模板面积'],
 ['','','']
];
document.getElementById('qtyBody').innerHTML=rules.map((r,i)=>`<tr><td class="row-no">${i<12?i+1:''}</td><td class="row-ylw">${r[0]}</td><td class="row-ylw">${r[1]}</td><td>${r[2]}</td></tr>`).join('');

// stair treads and handrails on the drawing
let d='';
for(let k=0;k<12;k++){
  const y=(587.7+k*17.8).toFixed(1);
  d+=`M1354 ${y}H1444M1508 ${y}H1639M1703 ${y}H1792`;
}
[1444,1639].forEach(x=>{
  d+=`M${x} 558H${x+64}V784M${x} 558V784M${x+5} 566H${x+59}M${x+6} 566V784M${x+17} 571V784H${x+6}M${x+46} 571V784H${x+58}M${x+17} 571H${x+46}M${x+58} 566V784`;
  d+=`M${x} 787H${x+64}V793H${x}z`;
  for(let y=578;y<784;y+=17.8) d+=`M${x} ${y}h6M${x+58} ${y}h6`;
});
d+='M1503 793V810H1508V793M1639 793V810H1644V793M1492 802H1654';
document.getElementById('stairLines').insertAdjacentHTML('beforeend',`<path d="${d}"/>`);
</script>
<script src="https://cdn.jsdelivr.net/npm/bootstrap@5.3.3/dist/js/bootstrap.bundle.min.js"></script>
</body>
</html>
